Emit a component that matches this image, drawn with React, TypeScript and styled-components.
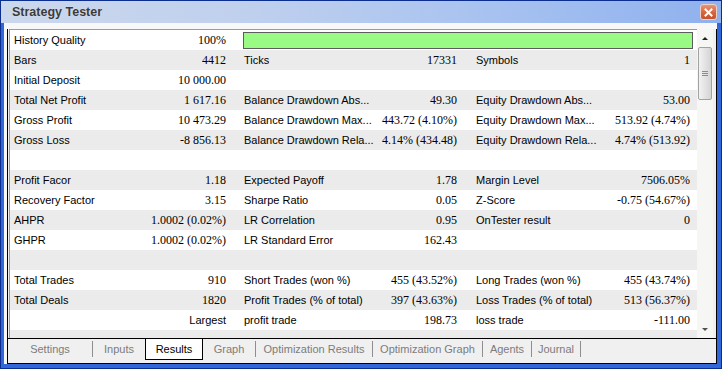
import { FC, Fragment } from 'react'
import styled, { createGlobalStyle } from 'styled-components'

const GlobalStyle = createGlobalStyle`
  html, body {
    margin: 0;
    padding: 0;
    background: #ffffff;
  }
  body {
    font-family: "Liberation Sans", Arial, sans-serif;
  }
`

const StyledWindow = styled.div`
  width: 722px;
  height: 369px;
  box-sizing: border-box;
  display: flex;
  flex-direction: column;
  background: #3167d9;
  border: 1px solid #0c2f8f;
  overflow: hidden;
`

const StyledTitleBar = styled.div`
  height: 22px;
  flex-shrink: 0;
  display: flex;
  align-items: center;
  justify-content: space-between;
  padding: 0 4px 0 11px;
  background: linear-gradient(to right, #cbd7ec 0%, #bfd0ee 35%, #a6c1f0 70%, #8fb1ee 100%);
`

const StyledTitle = styled.span`
  font-family: "Liberation Sans", Arial, sans-serif;
  font-weight: bold;
  font-size: 12.5px;
  color: #3a3a3a;
  text-shadow: 0 0 1px rgba(255, 255, 255, 0.6);
`

const StyledClose = styled.div`
  width: 17px;
  height: 16px;
  box-sizing: border-box;
  border: 1px solid #f1d0c4;
  border-radius: 3px;
  background: linear-gradient(to bottom, #e9937a, #d2653f 55%, #c4532f);
  display: flex;
  align-items: center;
  justify-content: center;
`

const StyledFrame = styled.div`
  flex: 1;
  display: flex;
  padding: 0 4px 4px 3px;
  min-height: 0;
`

const StyledClient = styled.div`
  flex: 1;
  display: flex;
  padding: 6px 0 0 3px;
  background: #f8f8f8;
  min-height: 0;
`

const StyledPanel = styled.div`
  flex: 1;
  display: flex;
  flex-direction: column;
  border: 1px solid #000;
  border-top: none;
  background: #f0f0f0;
  min-height: 0;
`

const StyledListArea = styled.div`
  flex: 1;
  display: flex;
  padding: 0 3px 0 1px;
  min-height: 0;
`

const StyledList = styled.div`
  width: 687px;
  border-left: 1px solid #9c9c9c;
  border-top: 1px solid #9c9c9c;
  overflow: hidden;
  background: #fff;
`

const StyledRow = styled.div<{ $alt: boolean }>`
  height: 20px;
  display: grid;
  grid-template-columns: 230px 232px 225px;
  background-color: ${(props) => (props.$alt ? '#ebebeb' : '#ffffff')};
`

const StyledCell = styled.div<{ $pr: number }>`
  display: flex;
  align-items: center;
  justify-content: space-between;
  padding: 0 ${(props) => props.$pr}px 0 4px;
  white-space: nowrap;
  overflow: hidden;
`

const StyledLabel = styled.span`
  font-family: "Liberation Sans", Arial, sans-serif;
  font-size: 11px;
  color: #000;
`

const StyledValue = styled.span`
  font-family: "Liberation Serif", "Times New Roman", serif;
  font-size: 12px;
  color: #000;
`

const StyledBarCell = styled.div`
  grid-column: span 2;
  display: flex;
  padding: 2px 4px 1px 3px;
`

const StyledBar = styled.div`
  flex: 1;
  box-sizing: border-box;
  height: 17px;
  border: 1px solid #5c5c5c;
  background: #99fb84;
`

const StyledScrollbar = styled.div`
  width: 16px;
  display: flex;
  flex-direction: column;
  background: #f6f6f4;
  border-top: 1px solid #f6f6f4;
`

const StyledArrow = styled.div<{ $down?: boolean }>`
  height: 17px;
  display: flex;
  align-items: center;
  justify-content: center;

  &:before {
    content: '';
    width: 0;
    height: 0;
    border-left: 3px solid transparent;
    border-right: 3px solid transparent;
    ${(props) => (props.$down ? 'border-top: 3px solid #505050;' : 'border-bottom: 3px solid #202020;')}
  }
`

const StyledTrack = styled.div`
  flex: 1;
  display: flex;
  flex-direction: column;
  padding: 0 1px;
`

const StyledThumb = styled.div`
  height: 53px;
  box-sizing: border-box;
  border: 1px solid #a2a2a2;
  border-radius: 2px;
  background: linear-gradient(to right, #f2f2f2, #e0e0e0 60%, #d4d4d4);
  display: flex;
  flex-direction: column;
  align-items: center;
  justify-content: center;
  gap: 1px;
`

const StyledGrip = styled.div`
  width: 6px;
  height: 1px;
  background: #8c8c8c;
`

const StyledTabStrip = styled.div`
  height: 25px;
  box-sizing: border-box;
  flex-shrink: 0;
  display: flex;
  align-items: flex-start;
  border-top: 1px solid #000;
  background: #f0f0f0;
`

const StyledTab = styled.div<{ $width: number; $active: boolean }>`
  width: ${(props) => props.$width}px;
  height: ${(props) => (props.$active ? 21 : 20)}px;
  box-sizing: border-box;
  display: flex;
  align-items: center;
  justify-content: center;
  padding-bottom: ${(props) => (props.$active ? 1 : 0)}px;
  font-family: "Liberation Sans", Arial, sans-serif;
  font-size: 11px;
  color: ${(props) => (props.$active ? '#000' : '#7c7c7c')};
  background: ${(props) => (props.$active ? '#fff' : 'transparent')};
  border: ${(props) => (props.$active ? '1px solid #000' : 'none')};
  border-top: none;
`

const StyledSep = styled.div`
  width: 1px;
  height: 16px;
  margin-top: 2px;
  background: #8e8e8e;
`

type Cell = [string, string] | null

const rows: Cell[][] = [
  [['History Quality', '100%']],
  [['Bars', '4412'], ['Ticks', '17331'], ['Symbols', '1']],
  [['Initial Deposit', '10 000.00'], null, null],
  [['Total Net Profit', '1 617.16'], ['Balance Drawdown Abs...', '49.30'], ['Equity Drawdown Abs...', '53.00']],
  [['Gross Profit', '10 473.29'], ['Balance Drawdown Max...', '443.72 (4.10%)'], ['Equity Drawdown Max...', '513.92 (4.74%)']],
  [['Gross Loss', '-8 856.13'], ['Balance Drawdown Rela...', '4.14% (434.48)'], ['Equity Drawdown Rela...', '4.74% (513.92)']],
  [null, null, null],
  [['Profit Facor', '1.18'], ['Expected Payoff', '1.78'], ['Margin Level', '7506.05%']],
  [['Recovery Factor', '3.15'], ['Sharpe Ratio', '0.05'], ['Z-Score', '-0.75 (54.67%)']],
  [['AHPR', '1.0002 (0.02%)'], ['LR Correlation', '0.95'], ['OnTester result', '0']],
  [['GHPR', '1.0002 (0.02%)'], ['LR Standard Error', '162.43'], null],
  [null, null, null],
  [['Total Trades', '910'], ['Short Trades (won %)', '455 (43.52%)'], ['Long Trades (won %)', '455 (43.74%)']],
  [['Total Deals', '1820'], ['Profit Trades (% of total)', '397 (43.63%)'], ['Loss Trades (% of total)', '513 (56.37%)']],
  [['', ''], ['profit trade', '198.73'], ['loss trade', '-111.00']],
  [null, null, null],
]

const tabs = [
  { name: 'Settings', width: 84 },
  { name: 'Inputs', width: 52 },
  { name: 'Results', width: 58 },
  { name: 'Graph', width: 52 },
  { name: 'Optimization Results', width: 116 },
  { name: 'Optimization Graph', width: 109 },
  { name: 'Agents', width: 48 },
  { name: 'Journal', width: 48 },
]
const activeTab = 2

const paddings = [14, 15, 7]

const App: FC = () => {
  return (
    <>
      <GlobalStyle />
      <StyledWindow>
        <StyledTitleBar>
          <StyledTitle>Strategy Tester</StyledTitle>
          <StyledClose>
            <svg width="9" height="9" viewBox="0 0 9 9">
              <path d="M1.5 1.5 L7.5 7.5 M7.5 1.5 L1.5 7.5" stroke="#fff" strokeWidth="2" strokeLinecap="square" />
            </svg>
          </StyledClose>
        </StyledTitleBar>

        <StyledFrame>
          <StyledClient>
            <StyledPanel>
              <StyledListArea>
                <StyledList>
                  {rows.map((row, i) => (
                    <StyledRow key={i} $alt={i % 2 === 1}>
                      {row.map((cell, j) => (
                        <StyledCell key={j} $pr={paddings[j]}>
                          {cell && <StyledLabel>{cell[0]}</StyledLabel>}
                          {cell && i === 14 && j === 0 ? (
                            <StyledLabel>Largest</StyledLabel>
                          ) : (
                            cell && <StyledValue>{cell[1]}</StyledValue>
                          )}
                        </StyledCell>
                      ))}
                      {i === 0 && (
                        <StyledBarCell>
                          <StyledBar />
                        </StyledBarCell>
                      )}
                    </StyledRow>
                  ))}
                </StyledList>

                <StyledScrollbar>
                  <StyledArrow />
                  <StyledTrack>
                    <StyledThumb>
                      <StyledGrip />
                      <StyledGrip />
                      <StyledGrip />
                    </StyledThumb>
                  </StyledTrack>
                  <StyledArrow $down />
                </StyledScrollbar>
              </StyledListArea>

              <StyledTabStrip>
                {tabs.map((tab, i) => (
                  <Fragment key={tab.name}>
                    <StyledTab $width={tab.width} $active={i === activeTab}>
                      {tab.name}
                    </StyledTab>
                    {i !== activeTab && i + 1 !== activeTab && <StyledSep />}
                  </Fragment>
                ))}
              </StyledTabStrip>
            </StyledPanel>
          </StyledClient>
        </StyledFrame>
      </StyledWindow>
    </>
  )
}

export default App
